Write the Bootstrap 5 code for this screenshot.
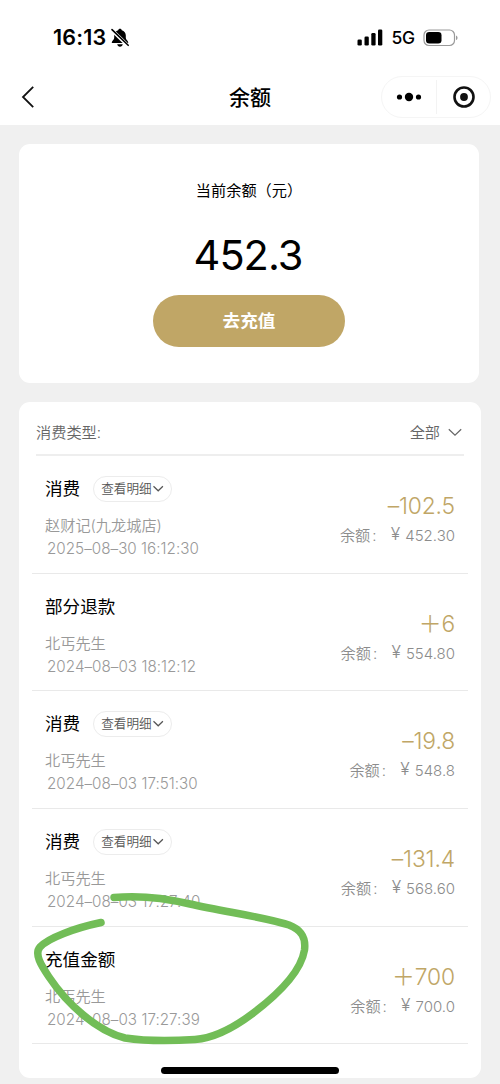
<!DOCTYPE html>
<html lang="zh-CN">
<head>
<meta charset="utf-8">
<meta name="viewport" content="width=device-width, initial-scale=1">
<title>余额</title>
<link href="https://cdn.jsdelivr.net/npm/bootstrap@5.3.0/dist/css/bootstrap.min.css" rel="stylesheet">
<style>
  :root { --gold: #c0a666; --rule: #e9e9e9; }
  body { background: #f0f0f0; color: #000; font-family: Inter, "Noto Sans CJK SC", sans-serif; line-height: 1; min-height: 1084px; overflow: hidden; }
  svg { display: block; flex: none; }
  .status-bar { height: 70px; padding: 5px 41px 0 53px; }
  .clock { font-size: 21.5px; font-weight: 600; letter-spacing: .15px; padding-top: 1px; }
  .network { font-size: 17.5px; font-weight: 450; letter-spacing: -.2px; padding-top: 1px; }
  .title-bar { height: 55px; padding: 0 9px 0 20px; }
  .title-bar > * { margin-top: -2px; }
  .page-title { font-size: 21px; font-weight: 500; padding-top: 2px; }
  .side { width: 99px; }
  .capsule { width: 110px; height: 42px; border: 1px solid #f5f5f5; border-radius: 21px; }
  .capsule > * + * { border-left: 1px solid #f3f3f3; height: 34px; }
  .panel { background: #fff; border-radius: 11px; margin-left: 19px; }
  .balance-panel { width: 460px; height: 239px; margin-top: 19px; padding-top: 35px; }
  .balance-label { font-size: 15.2px; line-height: 24px; }
  .balance-value { font-size: 41.5px; line-height: 50px; margin-top: 27px; padding-right: 2px; letter-spacing: -1px; font-weight: 370; }
  .recharge { width: 192px; height: 52px; margin-top: 15px; border-radius: 26px; background: var(--gold); color: #fff; font-size: 17.6px; font-weight: 700; }
  .history-panel { width: 462px; height: 676px; margin-top: 19px; padding: 0 13px; }
  .filter { height: 54px; margin: 0 4px; padding: 10px 2px 0 0; border-bottom: 2px solid #eee; font-size: 15.2px; color: #666; font-weight: 350; }
  .record { height: 117.7px; border-bottom: 1px solid var(--rule); padding: 20px 13px 0; }
  .kind { font-size: 17.6px; line-height: 26px; height: 26px; }
  .detail { height: 26px; width: 79px; margin-left: 13px; border: 1px solid #ececec; border-radius: 13px; font-size: 12.6px; color: #555; padding-left: 7px; font-weight: 350; }
  .who { font-size: 15.2px; line-height: 26px; margin-top: 11px; color: #999; font-weight: 350; }
  .when { font-size: 15.2px; line-height: 22px; margin: -1px 0 0 2px; color: #999; font-weight: 350; letter-spacing: .03px; }
  .amount { font-size: 22.8px; line-height: 30px; margin-top: 15px; color: var(--gold); font-weight: 350; letter-spacing: -.12px; }
  .remain { font-size: 15.2px; line-height: 24px; margin-top: 3px; color: #8c8c8c; font-weight: 350; }
  .remain-sum { font-size: 15px; margin-left: 5px; font-weight: 350; }
  .colon { width: 20.500px; padding-left: 2px; text-align: left; }
  .yen { font-size: 17.5px; margin-top: -2px; }
  .home-bar { position: absolute; left: 161px; top: 1067px; width: 178px; height: 7px; border-radius: 4px; background: #000; }
  .marker { position: absolute; left: 0; top: 880px; }
</style>
</head>
<body class="position-relative">
<header class="bg-white">
  <div class="status-bar d-flex align-items-center">
    <span class="clock">16:13</span>
    <svg class="ms-1" width="20" height="20" viewBox="0 0 20 20"><path d="M10 .7c1 0 1.700.6 1.800 1.500 2.500.7 4 2.700 4 5.300v2.500c0 1.700 2.500 2.700 2.500 5H1.700c0-2.300 2.500-3.300 2.500-5V7.500c0-2.600 1.500-4.600 4-5.300C8.300 1.300 9 .7 10 .7zM7.200 16.300h5.600c-.3 1.600-1.300 2.400-2.800 2.400s-2.500-.8-2.800-2.400z"/><path d="M1 1.300 18 17.800" stroke="#fff" stroke-width="3.600"/><path d="M2 1.600 18.200 17.300" stroke="#000" stroke-width="1.600" stroke-linecap="round"/></svg>
    <div class="ms-auto d-flex align-items-center">
      <svg width="26" height="17" viewBox="0 0 26 17"><rect x="0.500" y="10.500" width="4.300" height="6" rx="1.300"/><rect x="7.500" y="7.500" width="4.300" height="9" rx="1.300"/><rect x="14.300" y="4" width="4.300" height="12.500" rx="1.300"/><rect x="21" y=".5" width="4.300" height="16" rx="1.300"/></svg>
      <span class="network ms-2">5G</span>
      <svg class="ms-2" width="36" height="18" viewBox="0 0 36 18"><rect x="1" y="1" width="30.500" height="15.500" rx="5" fill="#fff" stroke="#999" stroke-width="1.200"/><rect x="3" y="3" width="15.500" height="11.500" rx="3.300"/><path d="M33 6.500c2 .8 2 3.800 0 4.600z" fill="#999"/></svg>
    </div>
  </div>
  <nav class="title-bar d-flex align-items-center justify-content-between">
    <div class="side"><svg width="16" height="24" viewBox="0 0 16 24"><path d="M13.200 1.800 3 12l10.200 10.200" fill="none" stroke="#111" stroke-width="1.800"/></svg></div>
    <div class="page-title">余额</div>
    <div class="capsule d-flex align-items-center">
      <div class="w-50 d-flex align-items-center justify-content-center"><svg width="26" height="10" viewBox="0 0 26 10"><circle cx="3.500" cy="5" r="2.600"/><circle cx="13" cy="5" r="4.200"/><circle cx="22.500" cy="5" r="2.600"/></svg></div>
      <div class="w-50 d-flex align-items-center justify-content-center"><svg width="24" height="24" viewBox="0 0 24 24"><circle cx="12" cy="12" r="9.500" fill="none" stroke="#111" stroke-width="2.600"/><circle cx="12" cy="12" r="3.900" fill="#111"/></svg></div>
    </div>
  </nav>
</header>
<main>
  <section class="panel balance-panel d-flex flex-column align-items-center">
    <div class="balance-label">当前余额（元）</div>
    <div class="balance-value">452.3</div>
    <button class="recharge btn border-0 p-0">去充值</button>
  </section>
  <section class="panel history-panel">
    <div class="filter d-flex align-items-center justify-content-between">
      <span>消费类型:</span>
      <span class="d-flex align-items-center">全部<svg class="ms-2" width="14" height="9" viewBox="0 0 14 9"><path d="m.8 1.200 6.200 6 6.200-6" fill="none" stroke="#666" stroke-width="1.200"/></svg></span>
    </div>
    <article class="record d-flex justify-content-between">
      <div><div class="kind d-flex align-items-center">消费<span class="detail d-flex align-items-center">查看明细<svg width="12" height="8" viewBox="0 0 12 8"><path d="m1.500 1.200 4.700 4.600 4.700-4.600" fill="none" stroke="#555" stroke-width="1.200"/></svg></span></div><div class="who">赵财记(九龙城店)</div><div class="when">2025–08–30 16:12:30</div></div>
      <div class="text-end"><div class="amount">–102.5</div><div class="remain d-flex justify-content-end">余额<span class="colon">:</span><span class="yen">¥</span><span class="remain-sum">452.30</span></div></div>
    </article>
    <article class="record d-flex justify-content-between">
      <div><div class="kind">部分退款</div><div class="who">北丐先生</div><div class="when">2024–08–03 18:12:12</div></div>
      <div class="text-end"><div class="amount">＋6</div><div class="remain d-flex justify-content-end">余额<span class="colon">:</span><span class="yen">¥</span><span class="remain-sum">554.80</span></div></div>
    </article>
    <article class="record d-flex justify-content-between">
      <div><div class="kind d-flex align-items-center">消费<span class="detail d-flex align-items-center">查看明细<svg width="12" height="8" viewBox="0 0 12 8"><path d="m1.500 1.200 4.700 4.600 4.700-4.600" fill="none" stroke="#555" stroke-width="1.200"/></svg></span></div><div class="who">北丐先生</div><div class="when">2024–08–03 17:51:30</div></div>
      <div class="text-end"><div class="amount">–19.8</div><div class="remain d-flex justify-content-end">余额<span class="colon">:</span><span class="yen">¥</span><span class="remain-sum">548.8</span></div></div>
    </article>
    <article class="record d-flex justify-content-between">
      <div><div class="kind d-flex align-items-center">消费<span class="detail d-flex align-items-center">查看明细<svg width="12" height="8" viewBox="0 0 12 8"><path d="m1.500 1.200 4.700 4.600 4.700-4.600" fill="none" stroke="#555" stroke-width="1.200"/></svg></span></div><div class="who">北丐先生</div><div class="when">2024–08–03 17:27:40</div></div>
      <div class="text-end"><div class="amount">–131.4</div><div class="remain d-flex justify-content-end">余额<span class="colon">:</span><span class="yen">¥</span><span class="remain-sum">568.60</span></div></div>
    </article>
    <article class="record d-flex justify-content-between">
      <div><div class="kind">充值金额</div><div class="who">北丐先生</div><div class="when">2024–08–03 17:27:39</div></div>
      <div class="text-end"><div class="amount">＋700</div><div class="remain d-flex justify-content-end">余额<span class="colon">:</span><span class="yen">¥</span><span class="remain-sum">700.0</span></div></div>
    </article>
  </section>
</main>
<svg class="marker" width="320" height="170" viewBox="0 880 320 170"><path d="M114 897.500C140 895 165 898 190 904C225 912 265 917 289 925C302 930 306 938 304.500 950C301 971 280 993 252 1014C236 1026 215 1038 195 1039.500C172 1041 145 1041 125 1038C97 1031 67 1004 49 977C41 965 34 954 40 947C48 938 75 928 101 922.500" fill="none" stroke="#72bd57" stroke-width="7.500" stroke-linecap="round" stroke-linejoin="round"/></svg>
<div class="home-bar"></div>
<script src="https://cdn.jsdelivr.net/npm/bootstrap@5.3.0/dist/js/bootstrap.bundle.min.js"></script>
</body>
</html>
